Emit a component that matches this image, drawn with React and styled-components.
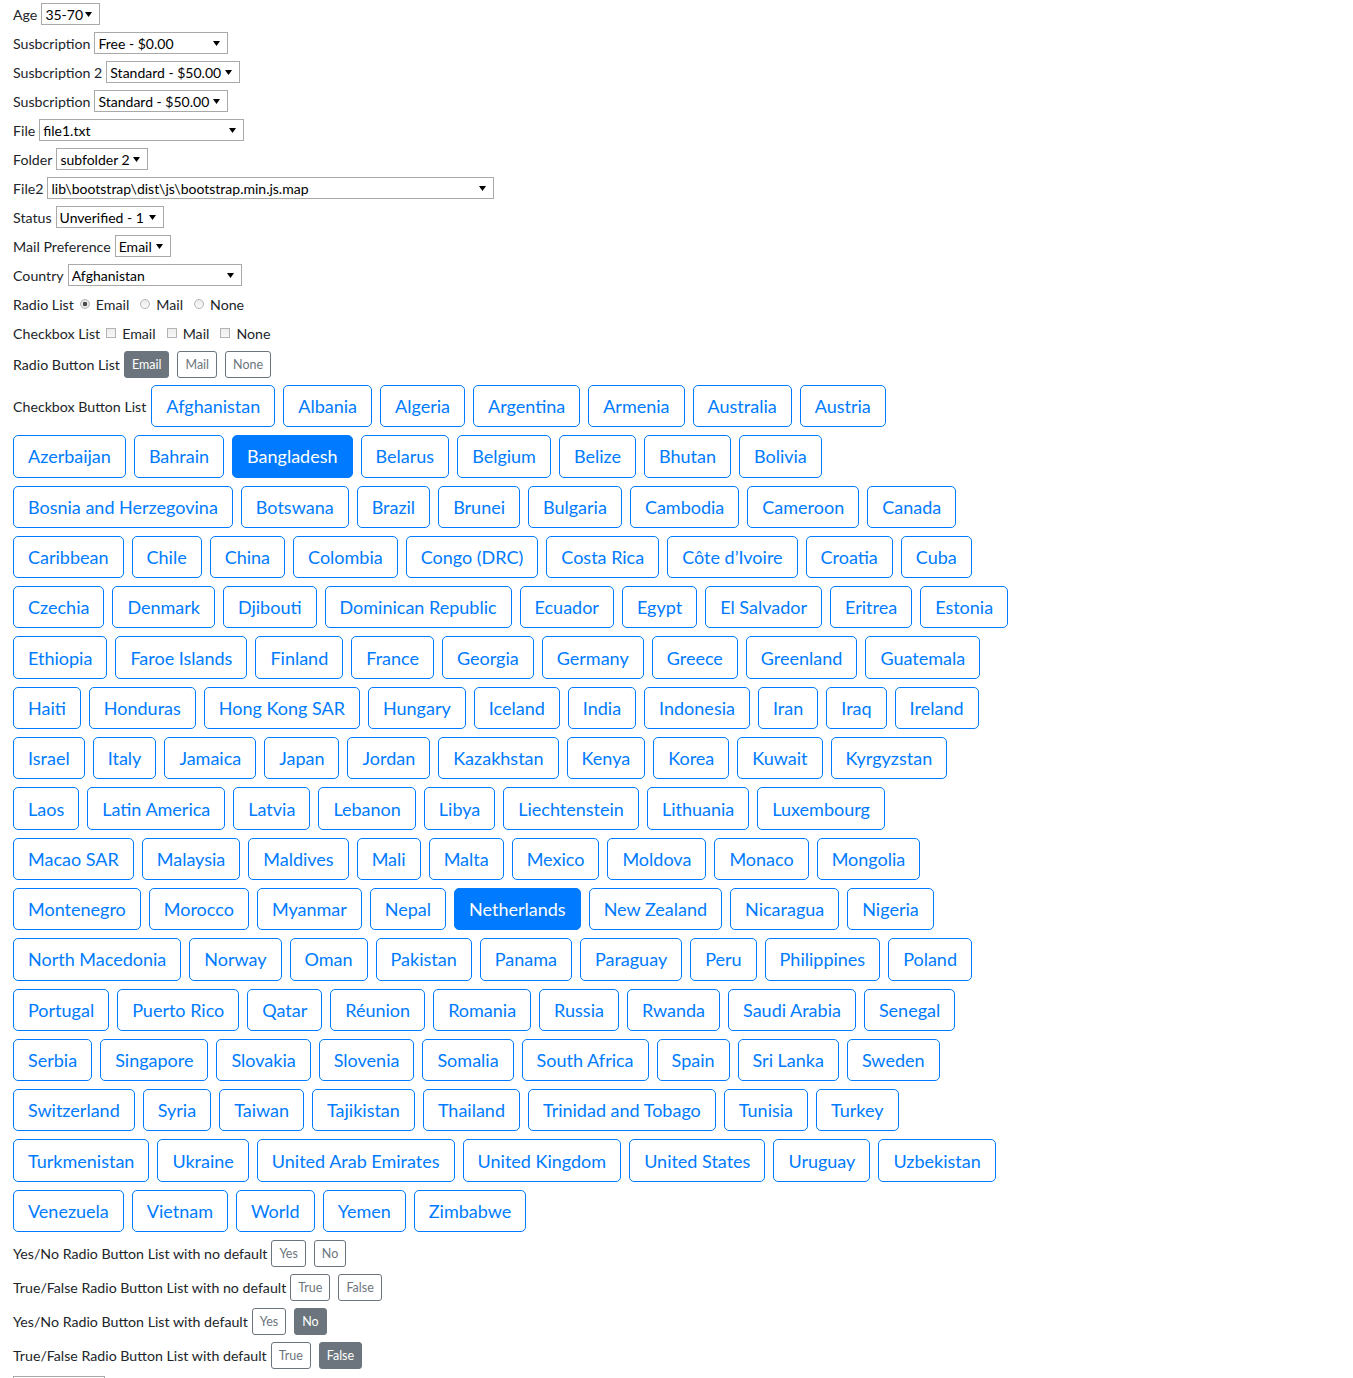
import React from "react";
import styled, { createGlobalStyle, css } from "styled-components";

const GlobalStyle = createGlobalStyle`
  body {
    margin: 0;
    background: #fff;
    color: #212529;
    font-family: Lato, "Liberation Sans", Arial, sans-serif;
  }
`;

const Page = styled.div`
  padding: 3px 0 0 13px;
  font-size: 14px;
`;

const Field = styled.div`
  display: flex;
  align-items: center;
  gap: 4px;
  height: ${(p) => p.$h || 22}px;
  margin-bottom: 7px;
`;

const Label = styled.span`
  font-size: 14.2px;
  white-space: nowrap;
`;

const arrow =
  "data:image/svg+xml;utf8,<svg xmlns='http://www.w3.org/2000/svg' width='7' height='5'><path d='M0 0h7L3.5 5z' fill='black'/></svg>";

const Select = styled.select`
  appearance: none;
  -webkit-appearance: none;
  box-sizing: border-box;
  width: ${(p) => p.$w}px;
  height: 22px;
  margin: 0;
  padding: 0 14px 0 3px;
  border: 1px solid #a9a9a9;
  border-radius: 0;
  background: #fff url("${arrow}") no-repeat right 7px center;
  font-family: Lato, "Liberation Sans", Arial, sans-serif;
  font-size: 14px;
  color: #000;
`;

const Option = styled.label`
  display: inline-flex;
  align-items: center;
  gap: 6px;
  margin-left: ${(p) => (p.$first ? 2 : 7)}px;
  font-size: 14.2px;
`;

const Radio = styled.span`
  box-sizing: border-box;
  width: 10px;
  height: 10px;
  border-radius: 50%;
  border: 1px solid #b4b4b4;
  background: ${(p) =>
    p.$checked
      ? "radial-gradient(circle, #4a4a4a 0 2px, #e6e6e6 2.5px)"
      : "linear-gradient(#ededed, #f8f8f8)"};
`;

const Check = styled.span`
  box-sizing: border-box;
  width: 10px;
  height: 10px;
  border: 1px solid #b4b4b4;
  background: linear-gradient(#ededed, #f8f8f8);
`;

const SmallGroup = styled.div`
  display: flex;
  gap: 8px;
`;

const SmallButton = styled.button`
  box-sizing: border-box;
  height: 27px;
  padding: 0 7px;
  border: 1px solid #6c757d;
  border-radius: 3px;
  font-family: Lato, "Liberation Sans", Arial, sans-serif;
  font-size: 12.5px;
  color: #6c757d;
  background: #fff;
  ${(p) =>
    p.$active &&
    css`
      background: #6c757d;
      color: #fff;
    `}
`;

const CountryRow = styled.div`
  display: flex;
  align-items: center;
  gap: 8px;
  margin-bottom: 8px;
`;

const RowLabel = styled.span`
  font-size: 14.2px;
  white-space: nowrap;
  margin-right: -3px;
`;

const CountryButton = styled.button`
  box-sizing: border-box;
  height: 42.3px;
  padding: 0 14px;
  border: 1px solid #007bff;
  border-radius: 5px;
  font-family: Lato, "Liberation Sans", Arial, sans-serif;
  font-size: 18px;
  white-space: nowrap;
  color: #007bff;
  background: #fff;
  ${(p) =>
    p.$active &&
    css`
      background: #007bff;
      color: #fff;
    `}
`;

const selects = [
  ["Age", "35-70", 59],
  ["Susbcription", "Free - $0.00", 134],
  ["Susbcription 2", "Standard - $50.00", 134],
  ["Susbcription", "Standard - $50.00", 134],
  ["File", "file1.txt", 205],
  ["Folder", "subfolder 2", 92],
  ["File2", "lib\\bootstrap\\dist\\js\\bootstrap.min.js.map", 447],
  ["Status", "Unverified - 1", 108],
  ["Mail Preference", "Email", 56],
  ["Country", "Afghanistan", 174],
];

const countryRows = [
  ["Afghanistan", "Albania", "Algeria", "Argentina", "Armenia", "Australia", "Austria"],
  ["Azerbaijan", "Bahrain", "Bangladesh", "Belarus", "Belgium", "Belize", "Bhutan", "Bolivia"],
  ["Bosnia and Herzegovina", "Botswana", "Brazil", "Brunei", "Bulgaria", "Cambodia", "Cameroon", "Canada"],
  ["Caribbean", "Chile", "China", "Colombia", "Congo (DRC)", "Costa Rica", "Côte d’Ivoire", "Croatia", "Cuba"],
  ["Czechia", "Denmark", "Djibouti", "Dominican Republic", "Ecuador", "Egypt", "El Salvador", "Eritrea", "Estonia"],
  ["Ethiopia", "Faroe Islands", "Finland", "France", "Georgia", "Germany", "Greece", "Greenland", "Guatemala"],
  ["Haiti", "Honduras", "Hong Kong SAR", "Hungary", "Iceland", "India", "Indonesia", "Iran", "Iraq", "Ireland"],
  ["Israel", "Italy", "Jamaica", "Japan", "Jordan", "Kazakhstan", "Kenya", "Korea", "Kuwait", "Kyrgyzstan"],
  ["Laos", "Latin America", "Latvia", "Lebanon", "Libya", "Liechtenstein", "Lithuania", "Luxembourg"],
  ["Macao SAR", "Malaysia", "Maldives", "Mali", "Malta", "Mexico", "Moldova", "Monaco", "Mongolia"],
  ["Montenegro", "Morocco", "Myanmar", "Nepal", "Netherlands", "New Zealand", "Nicaragua", "Nigeria"],
  ["North Macedonia", "Norway", "Oman", "Pakistan", "Panama", "Paraguay", "Peru", "Philippines", "Poland"],
  ["Portugal", "Puerto Rico", "Qatar", "Réunion", "Romania", "Russia", "Rwanda", "Saudi Arabia", "Senegal"],
  ["Serbia", "Singapore", "Slovakia", "Slovenia", "Somalia", "South Africa", "Spain", "Sri Lanka", "Sweden"],
  ["Switzerland", "Syria", "Taiwan", "Tajikistan", "Thailand", "Trinidad and Tobago", "Tunisia", "Turkey"],
  ["Turkmenistan", "Ukraine", "United Arab Emirates", "United Kingdom", "United States", "Uruguay", "Uzbekistan"],
  ["Venezuela", "Vietnam", "World", "Yemen", "Zimbabwe"],
];

const selectedCountries = ["Bangladesh", "Netherlands"];

const yesNoRows = [
  ["Yes/No Radio Button List with no default", ["Yes", "No"], null],
  ["True/False Radio Button List with no default", ["True", "False"], null],
  ["Yes/No Radio Button List with default", ["Yes", "No"], "No"],
  ["True/False Radio Button List with default", ["True", "False"], "False"],
];

const mailOptions = ["Email", "Mail", "None"];

export default function App() {
  return (
    <>
      <GlobalStyle />
      <Page>
        {selects.map(([label, value, w], i) => (
          <Field key={i}>
            <Label>{label}</Label>
            <Select $w={w} defaultValue={value}>
              <option>{value}</option>
            </Select>
          </Field>
        ))}

        <Field>
          <Label>Radio List</Label>
          {mailOptions.map((o, i) => (
            <Option key={o} $first={i === 0}>
              <Radio $checked={i === 0} />
              {o}
            </Option>
          ))}
        </Field>

        <Field>
          <Label>Checkbox List</Label>
          {mailOptions.map((o, i) => (
            <Option key={o} $first={i === 0}>
              <Check />
              {o}
            </Option>
          ))}
        </Field>

        <Field $h={27}>
          <Label>Radio Button List</Label>
          <SmallGroup>
            {mailOptions.map((o, i) => (
              <SmallButton key={o} $active={i === 0}>
                {o}
              </SmallButton>
            ))}
          </SmallGroup>
        </Field>

        {countryRows.map((row, r) => (
          <CountryRow key={r}>
            {r === 0 && <RowLabel>Checkbox Button List</RowLabel>}
            {row.map((c) => (
              <CountryButton key={c} $active={selectedCountries.includes(c)}>
                {c}
              </CountryButton>
            ))}
          </CountryRow>
        ))}

        {yesNoRows.map(([label, opts, active]) => (
          <Field key={label} $h={27}>
            <Label>{label}</Label>
            <SmallGroup>
              {opts.map((o) => (
                <SmallButton key={o} $active={o === active}>
                  {o}
                </SmallButton>
              ))}
            </SmallGroup>
          </Field>
        ))}

        <Field>
          <Select $w={92} defaultValue="">
            <option value=""></option>
          </Select>
        </Field>
      </Page>
    </>
  );
}
